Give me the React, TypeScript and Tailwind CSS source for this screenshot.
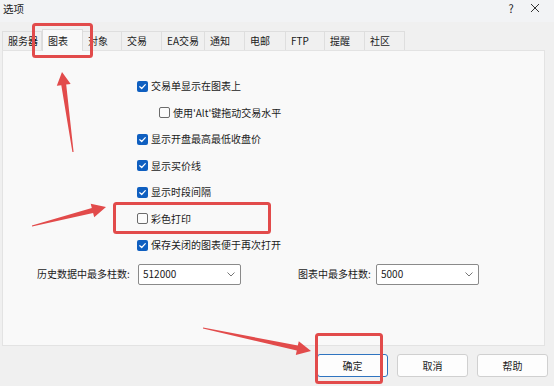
import React from "react";

type P = [number, number];

function arrowPoints(tail: P, tip: P, tailW: number, shaftW: number, headW: number, headL: number): string {
  const dx = tip[0] - tail[0];
  const dy = tip[1] - tail[1];
  const len = Math.hypot(dx, dy);
  const ux = dx / len;
  const uy = dy / len;
  const nx = -uy;
  const ny = ux;
  const bx = tip[0] - ux * headL;
  const by = tip[1] - uy * headL;
  const pts: P[] = [
    [tail[0] + nx * tailW / 2, tail[1] + ny * tailW / 2],
    [bx + nx * shaftW / 2, by + ny * shaftW / 2],
    [bx + nx * headW / 2, by + ny * headW / 2],
    tip,
    [bx - nx * headW / 2, by - ny * headW / 2],
    [bx - nx * shaftW / 2, by - ny * shaftW / 2],
    [tail[0] - nx * tailW / 2, tail[1] - ny * tailW / 2],
  ];
  return pts.map((p) => `${p[0].toFixed(1)},${p[1].toFixed(1)}`).join(" ");
}

const tabs: { label: string; w: number }[] = [
  { label: "服务器", w: 40 },
  { label: "图表", w: 41 },
  { label: "对象", w: 39 },
  { label: "交易", w: 40 },
  { label: "EA交易", w: 43 },
  { label: "通知", w: 40 },
  { label: "电邮", w: 41 },
  { label: "FTP", w: 39 },
  { label: "提醒", w: 40 },
  { label: "社区", w: 40 },
];

function Check({ checked }: { checked: boolean }) {
  return checked ? (
    <span className="w-[11px] h-[11px] rounded-[2px] bg-[#0f5fc0] flex items-center justify-center shrink-0">
      <svg width="9" height="9" viewBox="0 0 9 9">
        <path d="M1.8 4.7 L3.7 6.5 L7.3 2.6" fill="none" stroke="#fff" strokeWidth="1.2" strokeLinecap="round" strokeLinejoin="round" />
      </svg>
    </span>
  ) : (
    <span className="w-[11px] h-[11px] rounded-[2px] border border-[#6b6b6b] bg-[#fbfbfb] shrink-0" />
  );
}

function Row({ checked, label, indent }: { checked: boolean; label: string; indent?: boolean }) {
  return (
    <div className={`h-[26.5px] flex items-center gap-[3px] ${indent ? "pl-[156px]" : "pl-[134px]"}`}>
      <Check checked={checked} />
      <span className="text-[10px] text-[#1b1b1b] leading-none">{label}</span>
    </div>
  );
}

function Combo({ value }: { value: string }) {
  return (
    <div className="w-[103px] h-[21px] bg-white border border-[#8a8a8a] rounded-[2px] flex items-center justify-between pl-[4px] pr-[5px]">
      <span className="text-[10px] text-[#1b1b1b] leading-none">{value}</span>
      <svg width="8" height="5" viewBox="0 0 8 5">
        <path d="M0.5 0.5 L4 4 L7.5 0.5" fill="none" stroke="#666" strokeWidth="0.9" />
      </svg>
    </div>
  );
}

export default function App() {
  const red = "#e24b4b";
  return (
    <div
      className="relative w-[554px] h-[386px] bg-[#f0f0f0] overflow-hidden text-[#1b1b1b]"
      style={{ fontFamily: '"Noto Sans CJK SC", "Noto Sans", sans-serif' }}
    >
      {/* title bar */}
      <div className="h-[22px] bg-[#f2f3f5] flex items-center justify-between pl-[3px]">
        <span className="text-[10.5px] leading-none -mt-[4px]">选项</span>
        <div className="flex items-center -mt-[6px]">
          <span className="text-[11px] leading-none w-[38px] text-center">?</span>
          <svg width="10" height="10" viewBox="0 0 10 10" className="mr-[14px]">
            <path d="M1 1 L9 9 M9 1 L1 9" stroke="#333" strokeWidth="1" />
          </svg>
        </div>
      </div>

      {/* tabs */}
      <div className="h-[28px] flex items-end pl-[2px]">
        {tabs.map((t, i) =>
          i === 1 ? (
            <div
              key={t.label}
              className="h-[22px] bg-[#f9f9f9] border border-b-0 border-[#dcdcdc] flex items-center pl-[5px] text-[10px] leading-none relative top-[1px] z-10"
              style={{ width: t.w }}
            >
              {t.label}
            </div>
          ) : (
            <div
              key={t.label}
              className="h-[19px] bg-[#f0f0f0] border border-b-0 border-l-0 border-[#dedede] flex items-center pl-[5px] text-[10px] leading-none first:border-l"
              style={{ width: t.w }}
            >
              {t.label}
            </div>
          )
        )}
      </div>

      {/* panel */}
      <div className="ml-[2px] w-[543px] h-[296px] bg-[#f9f9f9] border border-[#e3e3e3] pt-[22px]">
        <Row checked label="交易单显示在图表上" />
        <Row checked={false} indent label="使用'Alt'键拖动交易水平" />
        <Row checked label="显示开盘最高最低收盘价" />
        <Row checked label="显示买价线" />
        <Row checked label="显示时段间隔" />
        <Row checked={false} label="彩色打印" />
        <Row checked label="保存关闭的图表便于再次打开" />
        <div className="flex items-center mt-[5px]">
          <span className="text-[10px] leading-none ml-[34px] w-[101px]">历史数据中最多柱数:</span>
          <Combo value="512000" />
          <span className="text-[10px] leading-none ml-[57px] w-[78px]">图表中最多柱数:</span>
          <Combo value="5000" />
        </div>
      </div>

      {/* buttons */}
      <div className="flex justify-end gap-[9px] pr-[6px] mt-[8px]">
        <button className="w-[71px] h-[23px] bg-[#fdfdfd] border border-[#2f74c0] rounded-[3px] text-[10px] leading-none">确定</button>
        <button className="w-[71px] h-[23px] bg-[#fdfdfd] border border-[#d0d0d0] rounded-[3px] text-[10px] leading-none">取消</button>
        <button className="w-[71px] h-[23px] bg-[#fdfdfd] border border-[#d0d0d0] rounded-[3px] text-[10px] leading-none">帮助</button>
      </div>

      {/* annotations */}
      <svg className="absolute inset-0 pointer-events-none" width="554" height="386" viewBox="0 0 554 386">
        <rect x="33.5" y="24.5" width="58" height="32" rx="2" fill="none" stroke={red} strokeWidth="3" />
        <rect x="114.5" y="203.5" width="155" height="29" rx="2" fill="none" stroke={red} strokeWidth="3" />
        <rect x="316.5" y="334.5" width="65" height="48" rx="2" fill="none" stroke={red} strokeWidth="3" />
        <polygon points={arrowPoints([73, 152], [62, 72], 1.2, 5, 14, 13)} fill={red} />
        <polygon points={arrowPoints([32, 226], [106, 207], 1.2, 5, 14, 14)} fill={red} />
        <polygon points={arrowPoints([203, 328], [311, 351], 1.2, 5, 14, 14)} fill={red} />
      </svg>
    </div>
  );
}
